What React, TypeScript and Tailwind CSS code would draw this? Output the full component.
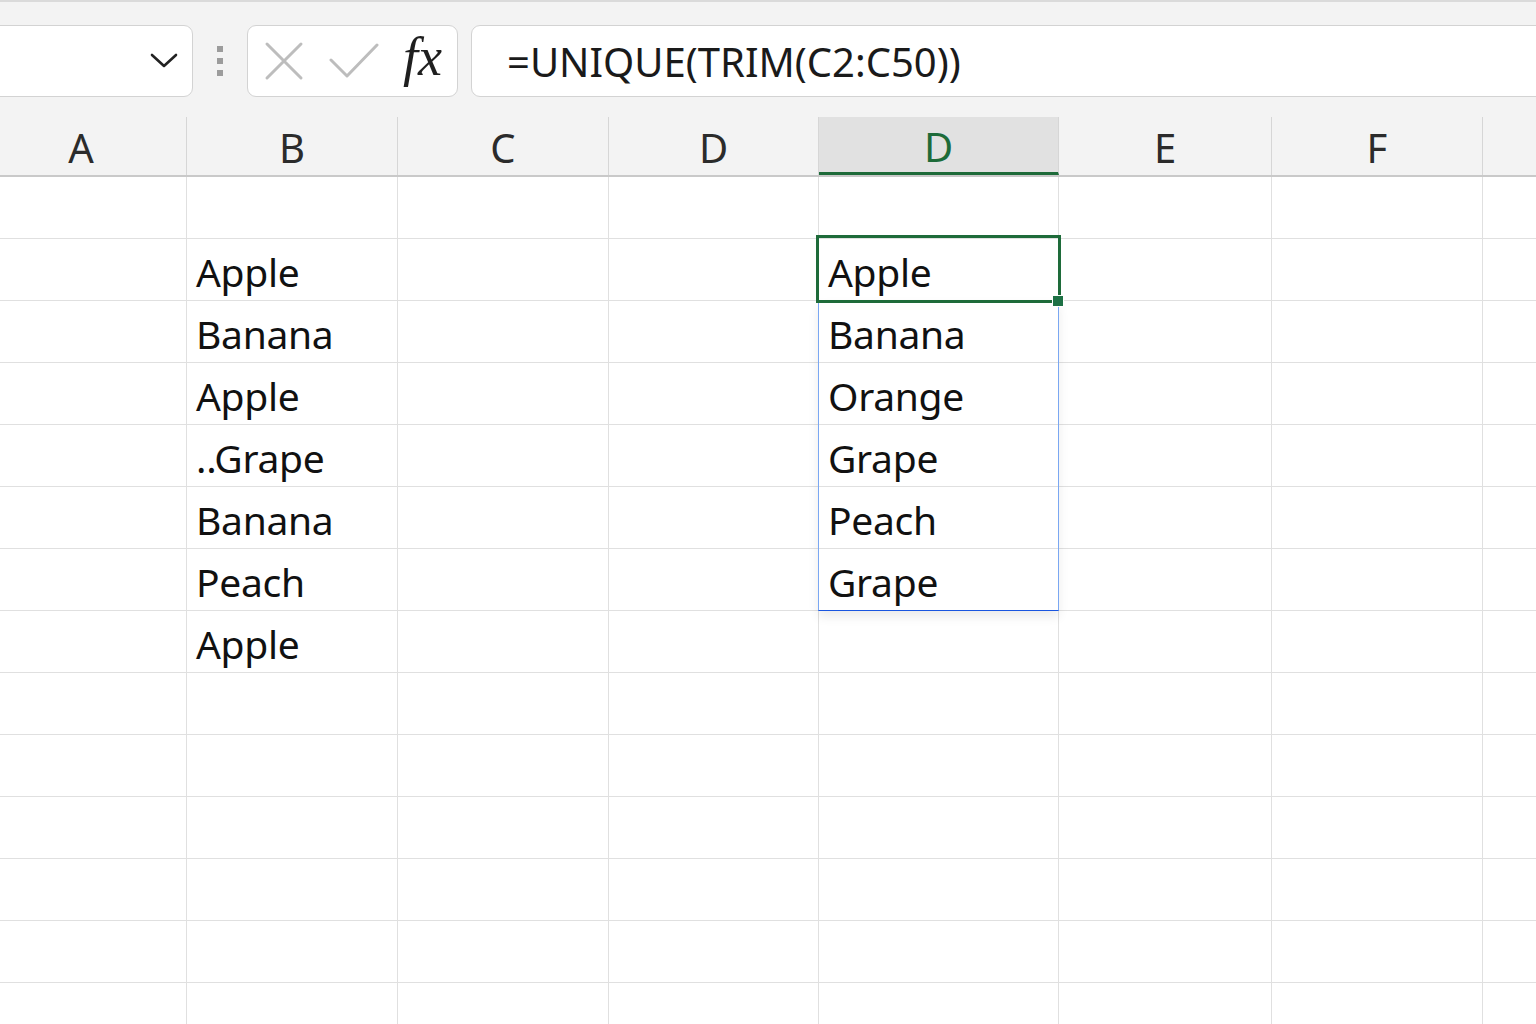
import React from 'react';

const columns = [
  { label: 'A', width: 'w-[211px]' },
  { label: 'B', width: 'w-[211px]' },
  { label: 'C', width: 'w-[211px]' },
  { label: 'D', width: 'w-[210px]' },
  { label: 'D', width: 'w-[240px]', selected: true },
  { label: 'E', width: 'w-[213px]' },
  { label: 'F', width: 'w-[211px]' },
  { label: '', width: 'w-[211px]' },
];

const source = ['', 'Apple', 'Banana', 'Apple', '..Grape', 'Banana', 'Peach', 'Apple'];
const unique = ['', 'Apple', 'Banana', 'Orange', 'Grape', 'Peach', 'Grape'];

function cellText(row: number, col: number) {
  if (col === 1) return source[row] ?? '';
  if (col === 4) return unique[row] ?? '';
  return '';
}

function FormulaBar() {
  return (
    <div className="h-[117px] bg-[#f3f3f3] border-t-2 border-[#dadada] flex items-start pt-[23px]">
      <div className="-ml-[20px] w-[213px] h-[72px] bg-white border border-[#d3d3d3] rounded-[9px] flex items-center justify-end pr-[14px]">
        <svg width="28" height="16" viewBox="0 0 28 16" fill="none">
          <path d="M2 2 L14 13 L26 2" stroke="#222" strokeWidth="2.6" strokeLinecap="round" strokeLinejoin="round" />
        </svg>
      </div>
      <div className="w-[54px] h-[72px] flex flex-col items-center justify-center gap-[6px]">
        <span className="block w-[6px] h-[6px] bg-[#9c9c9c]" />
        <span className="block w-[6px] h-[6px] bg-[#9c9c9c]" />
        <span className="block w-[6px] h-[6px] bg-[#9c9c9c]" />
      </div>
      <div className="w-[211px] h-[72px] bg-white border border-[#d3d3d3] rounded-[9px] flex items-center pl-[16px]">
        <svg width="40" height="40" viewBox="0 0 40 40" fill="none">
          <path d="M3 3 L37 37 M37 3 L3 37" stroke="#bdbdbd" strokeWidth="3" strokeLinecap="round" />
        </svg>
        <svg className="ml-[25px]" width="50" height="38" viewBox="0 0 50 38" fill="none">
          <path d="M2 18 L18 34 L48 3" stroke="#bdbdbd" strokeWidth="3" strokeLinecap="round" strokeLinejoin="round" />
        </svg>
        <span className="ml-[24px] font-['Liberation_Serif',serif] italic text-[54px] leading-none text-[#1f1f1f] -mt-[8px]">fx</span>
      </div>
      <div className="ml-[13px] flex-1 -mr-[20px] h-[72px] bg-white border border-[#d3d3d3] rounded-[9px] flex items-center pl-[35px]">
        <span className="text-[40px] leading-none text-[#1a1a1a] mt-[2px]">=UNIQUE(TRIM(C2:C50))</span>
      </div>
    </div>
  );
}

function HeaderRow() {
  return (
    <div className="flex -ml-[24px] h-[60px] bg-[#f3f3f3] border-b-2 border-[#c9c9c9]">
      {columns.map((c, i) => (
        <div
          key={i}
          className={`${c.width} shrink-0 h-full border-r border-[#d6d6d6] flex items-center justify-center text-[40px] leading-none ${
            c.selected ? 'bg-[#e1e1e1] text-[#1d6b39] border-b-[3px] border-b-[#1e6b3a] -mb-[2px] h-[60px]' : 'text-[#2b2b2b]'
          }`}
        >
          <span className="mt-[4px]">{c.label}</span>
        </div>
      ))}
    </div>
  );
}

export default function App() {
  const rows = Array.from({ length: 14 }, (_, i) => i);
  return (
    <div className="w-[1536px] h-[1024px] overflow-hidden bg-white font-['Noto_Sans',sans-serif]">
      <FormulaBar />
      <HeaderRow />
      <div className="relative">
        {rows.map((r) => (
          <div key={r} className="flex -ml-[24px] h-[62px]">
            {columns.map((c, ci) => (
              <div
                key={ci}
                className={`${c.width} shrink-0 h-full border-r border-b border-[#e0e0e0] flex items-center pl-[9px] text-[39px] leading-none text-[#111]`}
              >
                <span className="mt-[4px] tracking-[-0.3px]">{cellText(r, ci)}</span>
              </div>
            ))}
          </div>
        ))}
        {/* spill range outline */}
        <div className="absolute left-[818px] top-[123px] w-[241px] h-[311px] border border-[#7aa7f2] border-b-[#1a56e0] shadow-[0_6px_10px_rgba(0,0,0,0.08)] pointer-events-none" />
        {/* active cell */}
        <div className="absolute left-[816px] top-[58px] w-[245px] h-[68px] border-[3px] border-[#1e6b3a] pointer-events-none" />
        <div className="absolute left-[1052px] top-[118px] w-[12px] h-[12px] bg-[#1e7145] border border-white" />
      </div>
    </div>
  );
}
